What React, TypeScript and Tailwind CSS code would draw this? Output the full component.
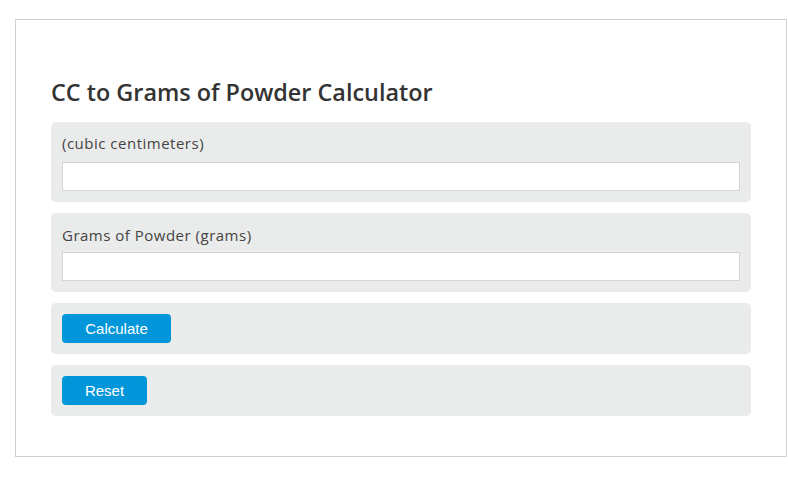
export default function App() {
  return (
    <div className="min-h-[498px] bg-white pl-[15px] pt-[19px]" style={{ fontFamily: '"Open Sans", sans-serif' }}>
      <div className="w-[772px] h-[438px] border border-[#d0d0d0] px-[35px] pt-[56px]">
        <h1 className="text-[23.4px] leading-[32px] font-semibold text-[#333] mb-[14px]">CC to Grams of Powder Calculator</h1>
        <div className="flex flex-col gap-[11px]">
          <div className="h-[80px] rounded-[5px] bg-[#eaebeb] px-[11px] pt-[10px]">
            <label className="block text-[15px] leading-[22px] tracking-[0.5px] text-[#444]">(cubic centimeters)</label>
            <input className="mt-[8px] block w-full h-[29px] bg-white border border-[#d4d4d4] outline-none" />
          </div>
          <div className="h-[79px] rounded-[5px] bg-[#eaebeb] px-[11px] pt-[11px]">
            <label className="block text-[15px] leading-[22px] tracking-[0.5px] text-[#444]">Grams of Powder (grams)</label>
            <input className="mt-[6px] block w-full h-[29px] bg-white border border-[#d4d4d4] outline-none" />
          </div>
          <div className="h-[51px] rounded-[5px] bg-[#eaebeb] px-[11px] pt-[11px]">
            <button className="h-[29px] w-[109px] rounded-[4px] bg-[#0096d9] pt-[2px] text-white text-[15px]" style={{ fontFamily: '"Liberation Sans", Arial, sans-serif' }}>Calculate</button>
          </div>
          <div className="h-[51px] rounded-[5px] bg-[#eaebeb] px-[11px] pt-[11px]">
            <button className="h-[29px] w-[85px] rounded-[4px] bg-[#0096d9] pt-[2px] text-white text-[15px]" style={{ fontFamily: '"Liberation Sans", Arial, sans-serif' }}>Reset</button>
          </div>
        </div>
      </div>
    </div>
  )
}
